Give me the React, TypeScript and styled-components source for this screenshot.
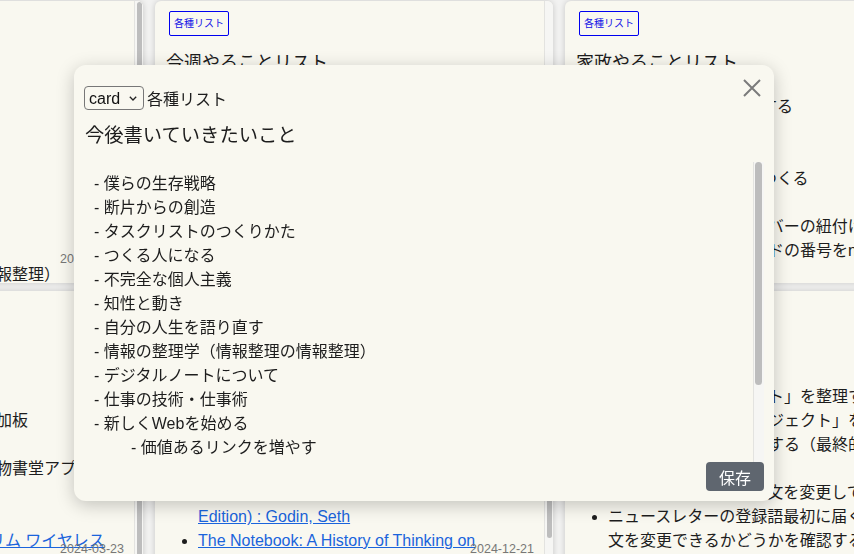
import React from 'react';
import styled, { createGlobalStyle } from 'styled-components';

const GlobalStyle = createGlobalStyle`
  html, body {
    margin: 0;
    padding: 0;
  }

  body {
    background: #f2f2f1;
    color: #1d1d1d;
    font-family: "Liberation Sans", "Noto Sans CJK JP", sans-serif;
    overflow: hidden;
  }
`;

const paper = '#f9f8f0';

const Page = styled.div`
  width: 854px;
  height: 554px;
  overflow: hidden;
`;

const Board = styled.div`
  display: grid;
  grid-template-columns: repeat(3, 398px);
  grid-auto-rows: 282px;
  gap: 8px 12px;
  padding-top: 1px;
  margin-left: -255px;
`;

const Card = styled.div`
  position: relative;
  display: flex;
  background: ${paper};
  border-radius: 6px;
  box-shadow: 0 0 6px rgba(0, 0, 0, 0.18);
  overflow: hidden;
`;

const CardBody = styled.div`
  flex: 1;
  min-width: 0;
  padding: 10px 11px 14px;
  overflow: hidden;
`;

const ScrollTrack = styled.div<{ $width: number }>`
  flex: none;
  width: ${(p) => p.$width}px;
  box-sizing: border-box;
  padding: 0 ${(p) => (p.$width > 10 ? 2 : 1)}px 0 ${(p) => (p.$width > 10 ? 1 : 2)}px;
  background: #f6f6f4;
  border-left: 1px solid #e3e3e0;
`;

const Thumb = styled.div<{ $top: number; $height: number }>`
  margin-top: ${(p) => p.$top}px;
  height: ${(p) => p.$height}px;
  border-radius: 4px;
  background: #bdbdbd;
`;

const Badge = styled.span`
  display: block;
  width: fit-content;
  margin-left: 3px;
  padding: 5px 4px;
  border: 1px solid #0000f0;
  border-radius: 2px;
  color: #1212e6;
  font-size: 10px;
  line-height: 13px;
`;

const CardTitle = styled.div`
  margin-top: 15px;
  font-size: 18px;
  line-height: 24px;
`;

const BulletList = styled.ul<{ $padRight?: number }>`
  margin: 20px 0 0;
  padding: 0 ${(p) => p.$padRight ?? 12}px 0 32px;
  font-size: 16px;
  line-height: 24px;
`;

const ItemLink = styled.a`
  color: #1a64dc;
  text-decoration: underline;
`;

const DateStamp = styled.span`
  position: absolute;
  right: 19px;
  bottom: 17px;
  color: #777;
  font-size: 12.5px;
  line-height: 14px;
`;

const Dialog = styled.div`
  position: fixed;
  top: 65px;
  left: 74px;
  width: 700px;
  height: 436px;
  box-sizing: border-box;
  padding: 10px;
  display: flex;
  flex-direction: column;
  background: ${paper};
  border-radius: 12px;
  box-shadow: 0 4px 18px rgba(0, 0, 0, 0.22);
`;

const CloseButton = styled.button`
  position: absolute;
  top: 14px;
  right: 13px;
  width: 18px;
  height: 18px;
  padding: 0;
  border: none;
  background: none;
  color: #7b7b7b;
  cursor: pointer;

  svg {
    display: block;
  }
`;

const HeaderRow = styled.div`
  display: flex;
  align-items: center;
  gap: 3px;
  margin-top: 11px;
  height: 24px;
  font-size: 16px;
`;

const SelectWrap = styled.div`
  position: relative;
  display: inline-flex;

  svg {
    position: absolute;
    right: 7px;
    top: 10px;
    pointer-events: none;
  }
`;

const KindSelect = styled.select`
  appearance: none;
  width: 60px;
  height: 24px;
  box-sizing: border-box;
  padding: 0 18px 0 4px;
  border: 1px solid #777;
  border-radius: 4px;
  background: transparent;
  color: #111;
  font: inherit;
  font-size: 16px;
`;

const DialogTitle = styled.div`
  margin: 12px 0 12px 1px;
  font-size: 19.3px;
  line-height: 28px;
`;

const EditorBox = styled.div`
  display: flex;
  height: 300px;
`;

const Editor = styled.textarea`
  flex: 1;
  min-width: 0;
  box-sizing: border-box;
  padding: 10px;
  border: none;
  outline: none;
  resize: none;
  overflow-y: auto;
  scrollbar-width: none;
  background: transparent;
  color: #1d1d1d;
  font-family: inherit;
  font-size: 16px;
  line-height: 24px;
  tab-size: 37px;
`;

const Footer = styled.div`
  display: flex;
  justify-content: flex-end;
`;

const SaveButton = styled.button`
  height: 29px;
  padding: 0 13px;
  border: none;
  border-radius: 4px;
  background: #5f666f;
  color: #fff;
  font-family: inherit;
  font-size: 16px;
`;

const writingList = [
  '僕らの生存戦略',
  '断片からの創造',
  'タスクリストのつくりかた',
  'つくる人になる',
  '不完全な個人主義',
  '知性と動き',
  '自分の人生を語り直す',
  '情報の整理学（情報整理の情報整理）',
  'デジタルノートについて',
  '仕事の技術・仕事術',
  '新しくWebを始める',
  '\t価値あるリンクを増やす',
  '\t自分のサイトを育てる',
  '書くことと考えること',
  '読書メモのつくりかた',
  '習慣としての発信',
];

const weeklyTodo = ['原稿の見直し', '請求書の送付', '打ち合わせの準備'];

const houseTodo = [
  '排水口を週2回は掃除する',
  '冷蔵庫の中身を整理',
  '食器棚の片付け',
  '次の献立表を2週間分つくる',
  '玄関の靴を整理',
  '家計簿アプリと各サーバーの紐付け',
  '家族分のポイントカードの番号をnotionにまとめる',
];

const wishList = [
  '無垢材のデスク天板',
  'デスク下収納用ペグボード追加板',
  'モニターアーム',
  '国語辞典と英和辞典を入れる物書堂アプリ',
  'ワイヤレスイヤホン',
  '万年筆のインク',
];

const books = [
  'Building a Second Brain : Forte, Tiago',
  'How to Take Smart Notes : Ahrens, Sönke',
  'Four Thousand Weeks : Burkeman, Oliver',
  'Atomic Habits : Clear, James',
  'Tribes: We Need You to Lead Us (English Edition) : Godin, Seth',
  'The Notebook: A History of Thinking on Paper : Allen, Roland',
];

const newsletterTasks = [
  '「未分類のメモとノート」を整理する',
  '「今月の進行中のプロジェクト」を確認する',
  '週次のレビューを実施する（最終的には自動化）',
  'ニュースレターの定型文を変更して送る',
  'ニュースレターの登録語最初に届くメール本文を変更できるかどうかを確認する',
];

const editorText = writingList
  .map((l) => (l.startsWith('\t') ? '\t- ' + l.slice(1) : '- ' + l))
  .join('\n');

const Chevron = () => (
  <svg width="8" height="5" viewBox="0 0 8 5">
    <path d="M0.8 0.8 L4 4 L7.2 0.8" fill="none" stroke="#222" strokeWidth="1.3" />
  </svg>
);

const CloseIcon = () => (
  <svg width="18" height="18" viewBox="0 0 18 18">
    <path d="M1 1 L17 17 M17 1 L1 17" stroke="currentColor" strokeWidth="2" />
  </svg>
);

const ListCard = ({
  title,
  date,
  thumb,
  children,
}: {
  title: string;
  date?: string;
  thumb?: [number, number];
  children: React.ReactNode;
}) => (
  <Card>
    <CardBody>
      <Badge>各種リスト</Badge>
      <CardTitle>{title}</CardTitle>
      {children}
    </CardBody>
    <ScrollTrack $width={9}>
      {thumb && <Thumb $top={thumb[0]} $height={thumb[1]} />}
    </ScrollTrack>
    {date && <DateStamp>{date}</DateStamp>}
  </Card>
);

export default function App() {
  return (
    <Page>
      <GlobalStyle />
      <Board>
        <ListCard title="今後書いていきたいこと" date="2024-02-14" thumb={[1, 150]}>
          <BulletList>
            {writingList.map((l) => (
              <li key={l}>{l.replace('\t', '')}</li>
            ))}
          </BulletList>
        </ListCard>

        <ListCard title="今週やることリスト">
          <BulletList>
            {weeklyTodo.map((l) => (
              <li key={l}>{l}</li>
            ))}
          </BulletList>
        </ListCard>

        <ListCard title="家政やることリスト" thumb={[1, 200]}>
          <BulletList>
            {houseTodo.map((l) => (
              <li key={l}>{l}</li>
            ))}
          </BulletList>
        </ListCard>

        <ListCard title="ほしいものリスト" date="2024-03-23" thumb={[60, 220]}>
          <BulletList>
            {wishList.map((l) => (
              <li key={l}>{l}</li>
            ))}
            <li>
              <ItemLink href="#">薄型 モバイルバッテリー スリム ワイヤレス</ItemLink>
            </li>
            <li>文庫本用のブックカバー</li>
          </BulletList>
        </ListCard>

        <ListCard title="読みたい本" date="2024-12-21" thumb={[2, 245]}>
          <BulletList $padRight={24}>
            {books.map((b) => (
              <li key={b}>
                <ItemLink href="#">{b}</ItemLink>
              </li>
            ))}
          </BulletList>
        </ListCard>

        <ListCard title="ニュースレター運用" thumb={[1, 230]}>
          <BulletList>
            {newsletterTasks.map((t) => (
              <li key={t}>{t}</li>
            ))}
          </BulletList>
        </ListCard>
      </Board>

      <Dialog>
        <CloseButton aria-label="close">
          <CloseIcon />
        </CloseButton>
        <HeaderRow>
          <SelectWrap>
            <KindSelect defaultValue="card">
              <option value="card">card</option>
              <option value="list">list</option>
            </KindSelect>
            <Chevron />
          </SelectWrap>
          <span>各種リスト</span>
        </HeaderRow>
        <DialogTitle>今後書いていきたいこと</DialogTitle>
        <EditorBox>
          <Editor defaultValue={editorText} spellCheck={false} />
          <ScrollTrack $width={11}>
            <Thumb $top={0} $height={223} />
          </ScrollTrack>
        </EditorBox>
        <Footer>
          <SaveButton>保存</SaveButton>
        </Footer>
      </Dialog>
    </Page>
  );
}
